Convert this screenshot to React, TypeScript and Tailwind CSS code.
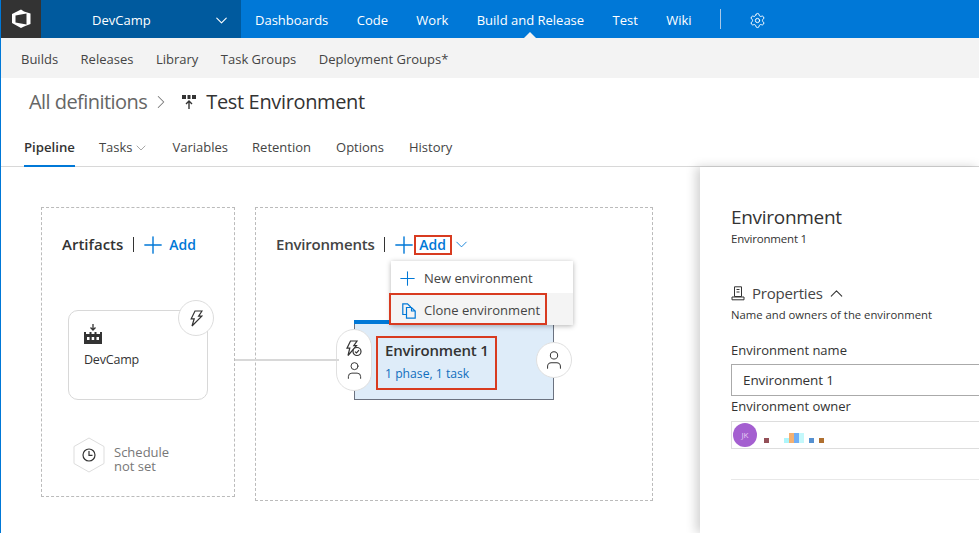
import { Plus, ChevronDown, ChevronUp, ChevronRight, Settings, User } from 'lucide-react';

const topLinks = ['Dashboards', 'Code', 'Work', 'Build and Release', 'Test', 'Wiki'];
const subLinks = ['Builds', 'Releases', 'Library', 'Task Groups', 'Deployment Groups*'];

function Logo() {
  return (
    <svg width="20" height="20" viewBox="0 0 20 20" fill="none">
      <path
        fillRule="evenodd"
        d="M1 5 L10 .5 L13 2.5 L19.5 4.5 V15 L13 17.5 L10 19 L1 14 Z M4.5 6.5 L15.5 4.5 V15.5 L4.5 13.5 Z"
        fill="#fff"
      />
    </svg>
  );
}

function BuildIcon() {
  return (
    <svg width="18" height="20" viewBox="0 0 18 20" fill="none">
      <path d="M9 0 V6 M6.5 3.5 L9 6 L11.5 3.5" stroke="#333" strokeWidth="1.3" />
      <path d="M0 20 V8 H2 V10 H5.5 V8 H7.5 V10 H10.5 V8 H12.5 V10 H16 V8 H18 V20 Z" fill="#333" />
      <rect x="3" y="13" width="2.5" height="3" fill="#fff" />
      <rect x="7.7" y="13" width="2.5" height="3" fill="#fff" />
      <rect x="12.5" y="13" width="2.5" height="3" fill="#fff" />
    </svg>
  );
}

function ReleaseIcon() {
  return (
    <svg width="16" height="16" viewBox="0 0 16 16" fill="none">
      <rect x="1" y="1" width="4" height="4" fill="#333" />
      <rect x="6.5" y="1" width="3" height="4" fill="#333" />
      <rect x="11" y="1" width="4" height="4" fill="#333" />
      <path d="M8 15 V7 M5 10 L8 7 L11 10" stroke="#333" strokeWidth="1.4" />
    </svg>
  );
}

function BoltIcon() {
  return (
    <svg width="13" height="17" viewBox="0 0 13 17" fill="none" stroke="#333" strokeWidth="1.2">
      <path d="M5 1 H12 L8.6 6.2 H11.8 L2 16 L4.2 8.8 H1.2 Z" />
    </svg>
  );
}

function GatesIcon() {
  return (
    <svg width="16" height="17" viewBox="0 0 16 17" fill="none" stroke="#333" strokeWidth="1.2">
      <path d="M4.5 1 H11 L7.8 5.6 H10.5 L2 15.5 L3.8 8.2 H1 Z" />
      <circle cx="11" cy="11.5" r="4" fill="#fff" />
      <path d="M9 11.6 L10.5 13 L13 10.2" />
    </svg>
  );
}

function CloneIcon() {
  return (
    <svg width="14" height="16" viewBox="0 0 14 16" fill="none" stroke="#0078d7" strokeWidth="1.2">
      <path d="M4 11.5 H.8 V.8 H5.5 L8.5 3.8 V4.5" />
      <path d="M4.5 4.5 H9.5 L13.2 8 V15.2 H4.5 Z M9.5 4.5 V8 H13.2" />
    </svg>
  );
}

function PropertiesIcon() {
  return (
    <svg width="14" height="15" viewBox="0 0 14 15" fill="none" stroke="#333" strokeWidth="1">
      <path d="M3.5 .8 H10.5 V10.5 H3.5 Z M5.5 3.5 H8.5 M5.5 6 H8.5" />
      <path d="M1 13.8 V11 H13 V13.8 Z" />
    </svg>
  );
}

export default function App() {
  return (
    <div className="relative h-[533px] w-[979px] overflow-hidden border-l border-[#0078d7] bg-white font-['Open_Sans','Liberation_Sans',sans-serif] text-[#333]">
      {/* Top nav */}
      <div className="-ml-px flex h-[38px] items-center bg-[#0078d7] text-white">
        <div className="flex h-full w-[41px] items-center justify-center bg-[#333]">
          <Logo />
        </div>
        <div className="flex h-full w-[200px] items-center justify-between bg-[#005a9e] pl-[51px] pr-[10px] pt-[3px] text-[13px]">
          <span>DevCamp</span>
          <ChevronDown size={19} strokeWidth={1.4} />
        </div>
        <div className="relative flex h-full items-center gap-[28.4px] pl-[14px] text-[13px]">
          {topLinks.map((link) => (
            <span key={link} className="relative flex h-full items-center pt-[3px]">
              {link}
              {link === 'Build and Release' && (
                <span className="absolute bottom-0 left-1/2 h-0 w-0 -translate-x-1/2 border-x-[6px] border-b-[6px] border-x-transparent border-b-[#f3f3f3]" />
              )}
            </span>
          ))}
        </div>
        <div className="ml-[28px] h-[20px] w-px bg-[#a8c8e8]" />
        <Settings size={17} strokeWidth={1.4} className="ml-[28px] mt-[2px]" />
      </div>

      {/* Sub nav */}
      <div className="-ml-px flex h-[40px] items-center gap-[22.5px] bg-[#f3f3f3] pl-[21px] pt-[3px] text-[13px] text-[#444]">
        {subLinks.map((link) => (
          <span key={link}>{link}</span>
        ))}
      </div>

      {/* Title */}
      <div className="flex h-[48px] items-center pl-[28px]">
        <span className="text-[20px] tracking-[-0.55px] text-[#666]">All definitions</span>
        <ChevronRight size={22} strokeWidth={1.1} className="ml-[3px] text-[#777]" />
        <span className="ml-[9px]"><ReleaseIcon /></span>
        <span className="ml-[9px] text-[20px] tracking-[-0.35px] text-[#333]">Test Environment</span>
      </div>

      {/* Tabs */}
      <div className="flex h-[41px] items-center gap-[24px] border-b border-[#d8d8d8] pl-[23px] pt-[3px] text-[13px] text-[#444]">
        <span className="relative flex h-full items-center text-[13.2px] font-semibold text-[#333]">
          Pipeline
          <span className="absolute bottom-[-1px] left-0 h-[2px] w-full bg-[#0078d7]" />
        </span>
        <span className="flex items-center">
          Tasks <ChevronDown size={16} strokeWidth={1.1} className="text-[#888]" />
        </span>
        <span>Variables</span>
        <span>Retention</span>
        <span className="ml-px">Options</span>
        <span className="ml-px">History</span>
      </div>

      {/* Canvas */}
      <div className="flex gap-[20px] pl-[40px] pt-[40px]">
        {/* Artifacts */}
        <div className="h-[290px] w-[194px] border border-dashed border-[#bbb] pl-[20px] pt-[27px]">
          <div className="flex h-[19px] items-center text-[15px] font-semibold">
            Artifacts
            <span className="ml-[10px] h-[15px] w-px bg-[#333]" />
            <Plus size={28} strokeWidth={1.2} className="-mx-[6px] ml-[5px] text-[#0078d7]" />
            <span className="ml-[8px] text-[14px] tracking-normal text-[#0078d7]">Add</span>
          </div>
          <div className="relative ml-[6px] mt-[56px] h-[90px] w-[140px] rounded-[10px] border border-[#d8d8d8] bg-white pl-[15px] pt-[13px]">
            <BuildIcon />
            <div className="mt-[7px] text-[12.5px] tracking-[-0.2px]">DevCamp</div>
            <div className="absolute -right-[7px] -top-[11px] flex h-[36px] w-[36px] items-center justify-center rounded-full border border-[#ddd] bg-white">
              <BoltIcon />
            </div>
          </div>
          <div className="ml-[11px] mt-[36px] flex items-center gap-[9px]">
            <svg width="32" height="36" viewBox="0 0 32 36" fill="none">
              <path d="M16 1 L31 9.5 V26.5 L16 35 L1 26.5 V9.5 Z" stroke="#ddd" />
              <circle cx="16" cy="18" r="6" stroke="#333" strokeWidth="1.2" />
              <path d="M16 14 V18.3 H19.5" stroke="#333" strokeWidth="1.2" />
            </svg>
            <div className="pt-[9px] text-[13px] leading-[14px] text-[#777]">
              Schedule
              <br />
              not set
            </div>
          </div>
        </div>

        {/* Environments */}
        <div className="relative h-[294px] w-[398px] border border-dashed border-[#bbb] pl-[20px] pt-[27px]">
          <div className="flex h-[19px] items-center text-[15px] font-semibold tracking-[-0.2px] text-[#444]">
            Environments
            <span className="ml-[9px] h-[15px] w-px bg-[#333]" />
            <Plus size={28} strokeWidth={1.2} className="-mx-[6px] ml-[5px] text-[#0078d7]" />
            <span className="ml-[2px] flex h-[20px] w-[38px] items-center justify-center border-2 border-[#d83b20] text-[14px] tracking-normal text-[#0078d7]">Add</span>
            <ChevronDown size={19} strokeWidth={1.1} className="text-[#0078d7]" />
          </div>

          {/* Environment card */}
          <div className="relative ml-[78px] mt-[66px] h-[80px] w-[200px] border border-t-0 border-[#6b7280] bg-[#deecf9]">
            <div className="absolute -left-px -right-px top-0 h-[4px] bg-[#0078d7]" />
            <div className="absolute left-[21px] top-[16px] h-[54px] w-[121px] border-[2px] border-[#d83b20] pl-[7px] pt-[3px]">
              <div className="text-[15px] font-semibold leading-[19px] tracking-[-0.2px]">Environment 1</div>
              <div className="mt-[6px] text-[12.2px] leading-[15px] text-[#106ebe]">1 phase, 1 task</div>
            </div>
            <div className="absolute -left-[19px] top-[9px] flex h-[62px] w-[36px] flex-col items-center justify-center gap-[3px] rounded-full border border-[#e0e0e0] bg-white">
              <GatesIcon />
              <User size={21} strokeWidth={1.1} />
            </div>
            <div className="absolute -right-[19px] top-[22px] flex h-[36px] w-[36px] items-center justify-center rounded-full border border-[#e0e0e0] bg-white">
              <User size={22} strokeWidth={1.1} />
            </div>
          </div>

          {/* Add menu */}
          <div className="absolute left-[135px] top-[53px] w-[182px] bg-white shadow-[0_1px_5px_rgba(0,0,0,0.3)]">
            <div className="flex h-[32px] items-center pl-[10px] pt-[3px] text-[13px] text-[#444]">
              <Plus size={23} strokeWidth={1.1} className="-m-[5px] text-[#0078d7]" />
              <span className="ml-[10px]">New environment</span>
            </div>
            <div className="relative flex h-[32px] items-center bg-[#f4f4f4] pl-[11px] pt-[3px] text-[13px] text-[#444]">
              <CloneIcon />
              <span className="ml-[8px]">Clone environment</span>
              <div className="absolute -left-[2px] top-0 h-[32px] w-[158px] border-[2px] border-[#d83b20]" />
            </div>
          </div>
        </div>
      </div>

      {/* Connector */}
      <div className="absolute left-[234px] top-[359px] h-[2px] w-[104px] bg-[#d8d8d8]" />

      {/* Right panel */}
      <div className="absolute left-[699px] top-[167px] h-[366px] w-[280px] bg-white pl-[31px] pt-[38px] shadow-[-4px_0_10px_rgba(0,0,0,0.18)]">
        <div className="text-[19px] leading-[24px] tracking-[-0.3px]">Environment</div>
        <div className="mt-[2px] text-[11.5px] leading-[16px] tracking-[-0.2px]">Environment 1</div>
        <div className="mt-[35px] flex items-center">
          <PropertiesIcon />
          <span className="ml-[7px] text-[15px] leading-[22px] tracking-[-0.2px] text-[#444]">Properties</span>
          <ChevronUp size={21} strokeWidth={1.2} className="ml-[3px]" />
        </div>
        <div className="mt-[3px] text-[11.3px] leading-[16px]">Name and owners of the environment</div>
        <div className="mt-[19px] text-[13px] leading-[17px]">Environment name</div>
        <div className="mt-[5px] flex h-[32px] w-[260px] items-center border border-[#aaa] pl-[11px] text-[13.5px] tracking-[-0.1px]">Environment 1</div>
        <div className="mt-[2px] text-[13px] leading-[17px]">Environment owner</div>
        <div className="mt-[6px] flex h-[28px] w-[260px] items-center border border-[#ddd] pl-[1px]">
          <div className="flex h-[24px] w-[24px] items-center justify-center rounded-full bg-[#a45fd0] text-[8px] text-[#e6cdf2]">JK</div>
          <div className="ml-[7px] mt-[6px] flex items-end">
            <span className="h-[5px] w-[5px] bg-[#945058]" />
            <span className="ml-[15px] h-[5px] w-[5px] bg-[#aef6fb]" />
            <span className="h-[10px] w-[5px] bg-[#f5b070]" />
            <span className="h-[10px] w-[5px] bg-[#70aef5]" />
            <span className="h-[10px] w-[5px] bg-[#c4f8fb]" />
            <span className="ml-[5px] h-[5px] w-[5px] bg-[#5590d0]" />
            <span className="ml-[5px] h-[5px] w-[5px] bg-[#b07030]" />
          </div>
        </div>
        <div className="mt-[30px] h-px w-[260px] bg-[#e8e8e8]" />
      </div>
    </div>
  );
}
